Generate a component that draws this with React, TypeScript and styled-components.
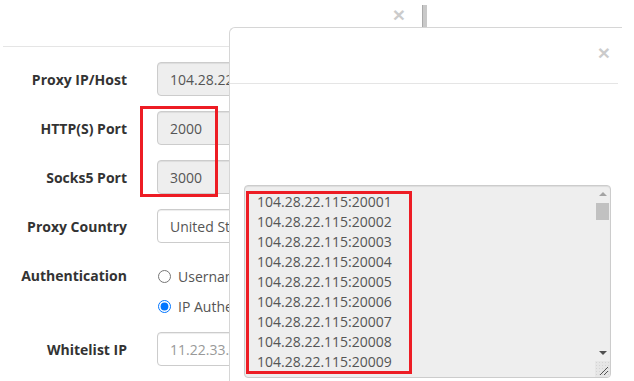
import styled, { createGlobalStyle } from "styled-components";

const GlobalStyle = createGlobalStyle`
  html, body {
    margin: 0;
    padding: 0;
    background: #fff;
  }
  body {
    font-family: "Open Sans", "Liberation Sans", sans-serif;
    color: #333;
  }
`;

const Page = styled.div`
  position: relative;
  width: 634px;
  height: 381px;
  overflow: hidden;
  background: #fff;
`;

const Dialog = styled.div`
  margin-left: 3px;
  width: 440px;
`;

const DialogHeader = styled.div`
  height: 46px;
  border-bottom: 1px solid #e5e5e5;
  display: flex;
  align-items: flex-start;
  justify-content: flex-end;
  padding-right: 16px;
`;

const Close = styled.span<{ $top: number }>`
  font-size: 21px;
  font-weight: 700;
  line-height: 1;
  color: #000;
  opacity: 0.2;
  font-family: "Liberation Sans", sans-serif;
  margin-top: ${(p) => p.$top}px;
`;

const Divider = styled.div`
  width: 4px;
  height: 22px;
  margin: 5px 0 0 17px;
  background: #c9c9c9;
  border-left: 1px solid #aaa;
`;

const Form = styled.div`
  padding-top: 15px;
  display: flex;
  flex-direction: column;
  gap: 15px;
`;

const Row = styled.div`
  display: grid;
  grid-template-columns: 124px 300px;
  column-gap: 30px;
  align-items: start;
`;

const Label = styled.label`
  text-align: right;
  font-weight: 700;
  font-size: 14px;
  line-height: 32px;
  padding-top: 2px;
  color: #333;
  white-space: nowrap;
`;

const Input = styled.input<{ $disabled?: boolean }>`
  box-sizing: border-box;
  height: 34px;
  width: 100%;
  padding: 6px 12px;
  font-family: inherit;
  font-size: 14px;
  color: #555;
  background: ${(p) => (p.$disabled ? "#eee" : "#fff")};
  border: 1px solid #ccc;
  border-radius: 4px;
  box-shadow: inset 0 1px 1px rgba(0, 0, 0, 0.075);
  outline: none;
  &::placeholder {
    color: #999;
  }
`;

const RadioGroup = styled.div`
  padding-top: 8px;
  display: flex;
  flex-direction: column;
  gap: 9px;
`;

const RadioItem = styled.label`
  display: flex;
  align-items: center;
  height: 21px;
  font-size: 14px;
  color: #555;
  white-space: nowrap;
  input {
    margin: 0 7px 0 1px;
    width: 13px;
    height: 13px;
  }
`;

const Modal = styled.div`
  position: absolute;
  left: 229px;
  top: 27px;
  width: 392px;
  height: 400px;
  background: #fff;
  border: 1px solid #d6d6d6;
  border-right: 0;
  border-radius: 6px 0 0 0;
`;

const ModalHeader = styled.div`
  height: 55px;
  margin-right: 4px;
  border-bottom: 1px solid #e5e5e5;
  display: flex;
  justify-content: flex-end;
  padding-right: 8px;
`;

const ModalBody = styled.div`
  padding: 101px 10px 0 14px;
`;

const ListFrame = styled.div`
  box-sizing: border-box;
  display: flex;
  width: 367px;
  height: 193px;
  background: #eee;
  border: 1px solid #ccc;
  border-radius: 4px;
  box-shadow: inset 0 1px 1px rgba(0, 0, 0, 0.075);
  overflow: hidden;
`;

const ListArea = styled.textarea`
  flex: 1;
  min-width: 0;
  margin: 0;
  padding: 6px 12px;
  font-family: "Open Sans", "Liberation Sans", sans-serif;
  font-size: 14px;
  line-height: 20px;
  color: #555;
  background: transparent;
  border: 0;
  resize: none;
  outline: none;
  overflow: hidden;
`;

const ScrollRail = styled.div`
  width: 15px;
  display: flex;
  flex-direction: column;
`;

const ArrowButton = styled.div<{ $dir: "up" | "down"; $color: string }>`
  height: 16px;
  display: flex;
  align-items: center;
  justify-content: center;
  &::before {
    content: "";
    border-left: 4px solid transparent;
    border-right: 4px solid transparent;
    ${(p) =>
      p.$dir === "up"
        ? `border-bottom: 4px solid ${p.$color};`
        : `border-top: 4px solid ${p.$color};`}
  }
`;

const Track = styled.div`
  flex: 1;
  padding: 1px 1px 0 1px;
`;

const Thumb = styled.div`
  height: 17px;
  background: #c1c1c1;
`;

const Corner = styled.div`
  height: 16px;
  background-color: #e6e6e6;
  background-image: radial-gradient(#d4d4d4 0.6px, transparent 0.8px);
  background-size: 3px 3px;
  display: flex;
  align-items: flex-end;
  justify-content: flex-end;
`;

const Highlight = styled.div`
  position: absolute;
  box-sizing: border-box;
  border: 3px solid #ed1c24;
  pointer-events: none;
`;

const ports = Array.from(
  { length: 90 },
  (_, i) => `104.28.22.115:${20001 + i}`
).join("\n");

export default function App() {
  return (
    <Page>
      <GlobalStyle />
      <Dialog>
        <DialogHeader>
          <Close $top={4}>×</Close>
          <Divider />
        </DialogHeader>
        <Form>
          <Row>
            <Label>Proxy IP/Host</Label>
            <Input $disabled readOnly value="104.28.22.115" />
          </Row>
          <Row>
            <Label>HTTP(S) Port</Label>
            <Input $disabled readOnly value="2000" />
          </Row>
          <Row>
            <Label>Socks5 Port</Label>
            <Input $disabled readOnly value="3000" />
          </Row>
          <Row>
            <Label>Proxy Country</Label>
            <Input readOnly value="United States" />
          </Row>
          <Row>
            <Label>Authentication</Label>
            <RadioGroup>
              <RadioItem>
                <input type="radio" name="auth" readOnly />
                Username &amp; Password
              </RadioItem>
              <RadioItem>
                <input type="radio" name="auth" defaultChecked />
                IP Authentication
              </RadioItem>
            </RadioGroup>
          </Row>
          <Row>
            <Label>Whitelist IP</Label>
            <Input placeholder="11.22.33.44" />
          </Row>
        </Form>
      </Dialog>

      <Modal>
        <ModalHeader>
          <Close $top={14}>×</Close>
        </ModalHeader>
        <ModalBody>
          <ListFrame>
            <ListArea readOnly value={ports} />
            <ScrollRail>
              <ArrowButton $dir="up" $color="#a3a3a3" />
              <Track>
                <Thumb />
              </Track>
              <ArrowButton $dir="down" $color="#505050" />
              <Corner>
                <svg width="15" height="16" viewBox="0 0 15 16">
                  <path
                    d="M13 6L5 14M13 10L9 14"
                    stroke="#555"
                    strokeWidth="1"
                    fill="none"
                  />
                </svg>
              </Corner>
            </ScrollRail>
          </ListFrame>
        </ModalBody>
      </Modal>

      <Highlight style={{ left: 140, top: 106, width: 78, height: 91 }} />
      <Highlight style={{ left: 246, top: 191, width: 166, height: 183 }} />
    </Page>
  );
}
